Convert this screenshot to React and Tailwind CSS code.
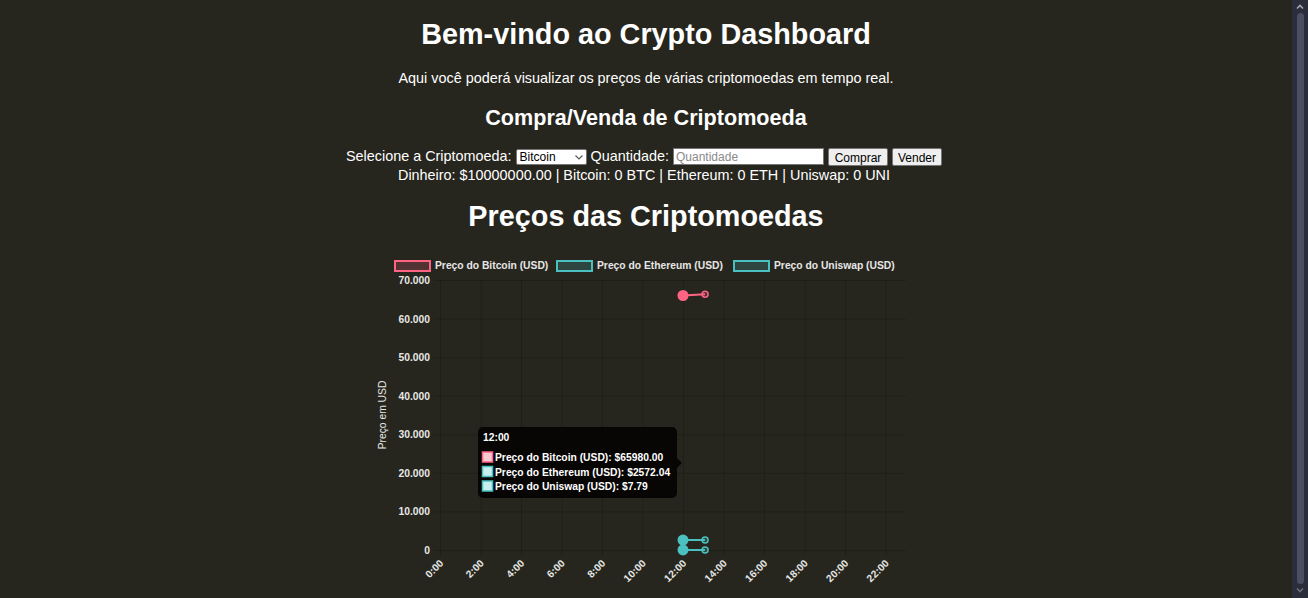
import React from 'react'

const PINK = 'rgb(255,99,132)'
const TEAL = 'rgb(75,192,192)'

// plot area inside the svg (svg origin sits at page x=372, y=250)
const LEFT = 69
const RIGHT = 535
const TOP = 30
const BOTTOM = 300
const FS = 10.3
const yOf = (v) => BOTTOM - (v * (BOTTOM - TOP)) / 70000
const xOf = (h) => LEFT + h * 20.25

const Y_TICKS = [70000, 60000, 50000, 40000, 30000, 20000, 10000, 0]
const X_TICKS = [0, 2, 4, 6, 8, 10, 12, 14, 16, 18, 20, 22]

const SERIES = [
  { color: PINK, fill: 'rgba(255,99,132,0.2)', pts: [[12, 65980], [13.09, 66300]] },
  { color: TEAL, fill: 'rgba(75,192,192,0.2)', pts: [[12, 2572.04], [13.09, 2580]] },
  { color: TEAL, fill: 'rgba(75,192,192,0.2)', pts: [[12, 7.79], [13.09, 7.8]] },
]

const fmt = (v) => (v === 0 ? '0' : `${v / 1000}.000`)

const PriceChart = () => (
  <svg width="540" height="348" className="block" style={{ fontFamily: '"Liberation Sans", Arial, sans-serif' }}>
    {/* legend */}
    <rect x="24" y="11" width="35" height="10" fill="rgba(255,99,132,0.2)" stroke={PINK} strokeWidth="2" />
    <text x="64" y="19" fontSize={FS} fontWeight="bold" fill="#e6e6e6">Preço do Bitcoin (USD)</text>
    <rect x="186" y="11" width="35" height="10" fill="rgba(75,192,192,0.2)" stroke={TEAL} strokeWidth="2" />
    <text x="226" y="19" fontSize={FS} fontWeight="bold" fill="#e6e6e6">Preço do Ethereum (USD)</text>
    <rect x="363" y="11" width="35" height="10" fill="rgba(75,192,192,0.2)" stroke={TEAL} strokeWidth="2" />
    <text x="403" y="19" fontSize={FS} fontWeight="bold" fill="#e6e6e6">Preço do Uniswap (USD)</text>

    {/* grid */}
    {Y_TICKS.map((v) => (
      <line key={v} x1={LEFT - 6} x2={RIGHT} y1={yOf(v) + 0.5} y2={yOf(v) + 0.5} stroke="rgba(0,0,0,0.18)" />
    ))}
    {X_TICKS.map((h) => (
      <line key={h} x1={xOf(h) + 0.5} x2={xOf(h) + 0.5} y1={TOP} y2={BOTTOM + 6} stroke="rgba(0,0,0,0.18)" />
    ))}

    {/* y axis */}
    {Y_TICKS.map((v) => (
      <text key={v} x="59" y={yOf(v) + 4} textAnchor="end" fontSize={FS} fontWeight="bold" fill="#e6e6e6">
        {fmt(v)}
      </text>
    ))}
    <text x="15" y="165" transform="rotate(-90 15 165)" textAnchor="middle" fontSize={FS} fill="#e6e6e6">
      Preço em USD
    </text>

    {/* x axis */}
    {X_TICKS.map((h) => (
      <text
        key={h}
        x={xOf(h) + 4}
        y="314"
        transform={`rotate(-45 ${xOf(h) + 4} 314)`}
        textAnchor="end"
        fontSize={FS}
        fontWeight="bold"
        fill="#e6e6e6"
      >
        {h}:00
      </text>
    ))}

    {/* data */}
    {SERIES.map((s, i) => {
      const [a, b] = s.pts
      return (
        <g key={i}>
          <line x1={xOf(a[0])} y1={yOf(a[1])} x2={xOf(b[0])} y2={yOf(b[1])} stroke={s.color} strokeWidth="2" />
          <circle cx={xOf(b[0])} cy={yOf(b[1])} r="3" fill={s.fill} stroke={s.color} strokeWidth="1.5" />
          <circle cx={xOf(a[0])} cy={yOf(a[1])} r="5.5" fill={s.color} />
        </g>
      )
    })}

    {/* tooltip */}
    <rect x="107" y="177" width="199" height="71" rx="5" fill="rgba(0,0,0,0.82)" />
    <path d="M306 208 L311 213 L306 218 Z" fill="rgba(0,0,0,0.82)" />
    <text x="112" y="191" fontSize={FS} fontWeight="bold" fill="#fff">12:00</text>
    {[
      { c: PINK, f: '#f7c9d3', t: 'Preço do Bitcoin (USD): $65980.00', y: 207 },
      { c: TEAL, f: '#c9eeee', t: 'Preço do Ethereum (USD): $2572.04', y: 221.5 },
      { c: TEAL, f: '#c9eeee', t: 'Preço do Uniswap (USD): $7.79', y: 236 },
    ].map((r) => (
      <g key={r.t}>
        <rect x="111.5" y={r.y - 5} width="10" height="10" fill={r.f} stroke={r.c} strokeWidth="1.5" />
        <text x="124" y={r.y + 4} fontSize={FS} fontWeight="bold" fill="#fff">{r.t}</text>
      </g>
    ))}
  </svg>
)

const Scrollbar = () => (
  <div className="w-[16px] shrink-0 bg-[#2b2d3a] flex flex-col items-center">
    <svg width="10" height="10" viewBox="0 0 10 10" className="mt-[2px]">
      <path d="M2 6.5 L5 3.5 L8 6.5" stroke="#a5a8b8" strokeWidth="1.6" fill="none" />
    </svg>
    <div className="flex-1 w-[7px] my-[1px] rounded-full bg-[#4c4f64]" />
    <svg width="10" height="10" viewBox="0 0 10 10" className="mb-[3px]">
      <path d="M2 3.5 L5 6.5 L8 3.5" stroke="#6b6e80" strokeWidth="1.6" fill="none" />
    </svg>
  </div>
)

export default function App() {
  return (
    <div className="flex h-[598px] w-full overflow-hidden bg-[#27261e] text-white font-['Liberation_Sans',Arial,sans-serif]">
      <main className="flex-1 flex flex-col items-center">
        <h1 className="mt-[18px] text-[28.8px] leading-[33px] font-bold">Bem-vindo ao Crypto Dashboard</h1>
        <p className="mt-[19px] text-[14.4px] leading-[16.5px]">
          Aqui você poderá visualizar os preços de várias criptomoedas em tempo real.
        </p>
        <h2 className="mt-[18px] text-[21.6px] leading-[25px] font-bold">Compra/Venda de Criptomoeda</h2>

        <div className="mt-[18px] h-[18px] flex items-center gap-[4px] text-[14.4px] mr-[4px]">
          <span>Selecione a Criptomoeda:</span>
          <div className="h-[16px] w-[71px] bg-white border border-[#767676] rounded-[2px] flex items-center justify-between pl-[3px] pr-[2px] text-black text-[12px]">
            <span>Bitcoin</span>
            <svg width="10" height="10" viewBox="0 0 10 10">
              <path d="M1.5 3.5 L5 7 L8.5 3.5" stroke="#555" strokeWidth="1.1" fill="none" />
            </svg>
          </div>
          <span>Quantidade:</span>
          <input
            placeholder="Quantidade"
            className="h-[17px] w-[151px] bg-white border border-[#767676] px-[2px] text-[12px] text-black placeholder:text-[#8a8a8a] outline-none"
          />
          <button className="h-[18px] w-[60px] bg-[#efefef] border border-[#767676] rounded-[2px] text-[12px] text-black">
            Comprar
          </button>
          <button className="h-[18px] w-[50px] bg-[#efefef] border border-[#767676] rounded-[2px] text-[12px] text-black">
            Vender
          </button>
        </div>
        <div className="mt-[1px] text-[14.4px] leading-[16.5px] mr-[4px]">
          Dinheiro: $10000000.00 | Bitcoin: 0 BTC | Ethereum: 0 ETH | Uniswap: 0 UNI
        </div>

        <h1 className="mt-[16.5px] text-[28.8px] leading-[33px] font-bold">Preços das Criptomoedas</h1>
        <div className="mt-[17px] mr-[10px]">
          <PriceChart />
        </div>
      </main>
      <Scrollbar />
    </div>
  )
}
